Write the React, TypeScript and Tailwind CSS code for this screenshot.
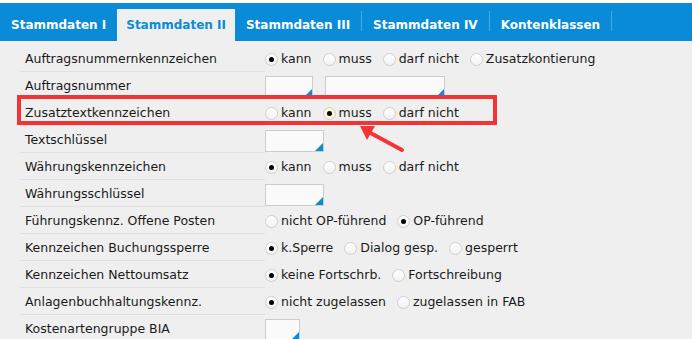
import React from "react";

const font = { fontFamily: '"DejaVu Sans", Verdana, sans-serif' };

type Opt = { label: string; checked?: boolean; hot?: boolean };

type Row =
  | { label: string; kind: "radio"; options: Opt[] }
  | { label: string; kind: "inputs"; widths: number[] };

const rows: Row[] = [
  {
    label: "Auftragsnummernkennzeichen",
    kind: "radio",
    options: [{ label: "kann", checked: true }, { label: "muss" }, { label: "darf nicht" }, { label: "Zusatzkontierung" }],
  },
  { label: "Auftragsnummer", kind: "inputs", widths: [48, 120] },
  {
    label: "Zusatztextkennzeichen",
    kind: "radio",
    options: [{ label: "kann" }, { label: "muss", checked: true, hot: true }, { label: "darf nicht" }],
  },
  { label: "Textschlüssel", kind: "inputs", widths: [59] },
  {
    label: "Währungskennzeichen",
    kind: "radio",
    options: [{ label: "kann", checked: true }, { label: "muss" }, { label: "darf nicht" }],
  },
  { label: "Währungsschlüssel", kind: "inputs", widths: [59] },
  {
    label: "Führungskennz. Offene Posten",
    kind: "radio",
    options: [{ label: "nicht OP-führend" }, { label: "OP-führend", checked: true }],
  },
  {
    label: "Kennzeichen Buchungssperre",
    kind: "radio",
    options: [{ label: "k.Sperre", checked: true }, { label: "Dialog gesp." }, { label: "gesperrt" }],
  },
  {
    label: "Kennzeichen Nettoumsatz",
    kind: "radio",
    options: [{ label: "keine Fortschrb.", checked: true }, { label: "Fortschreibung" }],
  },
  {
    label: "Anlagenbuchhaltungskennz.",
    kind: "radio",
    options: [{ label: "nicht zugelassen", checked: true }, { label: "zugelassen in FAB" }],
  },
  { label: "Kostenartengruppe BIA", kind: "inputs", widths: [35] },
];

const tabs = ["Stammdaten I", "Stammdaten II", "Stammdaten III", "Stammdaten IV", "Kontenklassen"];

function Radio({ checked, hot }: { checked?: boolean; hot?: boolean }) {
  return (
    <span
      className={
        "w-[13px] h-[13px] rounded-full border border-[#cfcfcf] flex items-center justify-center flex-shrink-0 " +
        (hot ? "bg-[#fbf6d6]" : "bg-gradient-to-b from-white to-[#f2f2f2]")
      }
    >
      {checked && <span className="w-[5px] h-[5px] rounded-full bg-black" />}
    </span>
  );
}

function Field({ width }: { width: number }) {
  return (
    <div className="relative h-[22px] bg-[#fafafa] border border-[#cccccc]" style={{ width }}>
      <span className="absolute right-0 bottom-0 w-0 h-0 border-l-[8px] border-l-transparent border-b-[8px] border-b-[#0a8bd8]" />
    </div>
  );
}

export default function App() {
  return (
    <div className="w-[692px] h-[339px] bg-[#efefef] overflow-hidden relative text-[#1a1a1a]" style={font}>
      <div className="h-[3px] bg-white" />
      <div className="h-[38px] bg-[#0a8bd8] flex items-end">
        {tabs.map((t, i) => {
          const active = i === 1;
          return (
            <div key={t} className="flex items-end">
              {i > 2 && <span className="w-px h-[20px] bg-[#4aa9e3] mb-[10px]" />}
              <div
                className={clsx(
                  "h-[32px] flex items-center text-[12px] font-bold",
                  active ? "bg-[#efefef] text-[#0a8bd8] px-[9px]" : "text-white px-[11px]"
                )}
              >
                {t}
              </div>
              {i === 4 && <span className="w-px h-[20px] bg-[#4aa9e3] mb-[10px]" />}
            </div>
          );
        })}
      </div>
      <div className="pt-[4px]">
        {rows.map((r) => (
          <div key={r.label} className="flex h-[27px]">
            <div className="ml-[20px] w-[245px] pl-[5px] flex items-center pt-[3px] border-b border-[#e0e0e0] text-[12.5px] whitespace-nowrap">
              {r.label}
            </div>
            {r.kind === "radio" ? (
              <div className="flex items-center gap-[11px] text-[12.5px] pt-[1px]">
                {r.options.map((o) => (
                  <div key={o.label} className="flex items-center gap-[3px] whitespace-nowrap">
                    <Radio checked={o.checked} hot={o.hot} />
                    <span>{o.label}</span>
                  </div>
                ))}
              </div>
            ) : (
              <div className="flex items-start gap-[12px] pt-[4px]">
                {r.widths.map((w, j) => (
                  <Field key={j} width={w} />
                ))}
              </div>
            )}
          </div>
        ))}
      </div>
      <div className="absolute left-[17px] top-[95px] w-[480px] h-[30px] border-[4px] border-[#f23434]" />
      <svg className="absolute left-[355px] top-[122px]" width="52" height="32" viewBox="0 0 52 32">
        <line x1="47" y1="28" x2="10" y2="8" stroke="#f23434" strokeWidth="4" strokeLinecap="round" />
        <polygon points="5,4 20,4 12,18" fill="#f23434" />
      </svg>
    </div>
  );
}

function clsx(...a: (string | false | undefined)[]) {
  return a.filter(Boolean).join(" ");
}
